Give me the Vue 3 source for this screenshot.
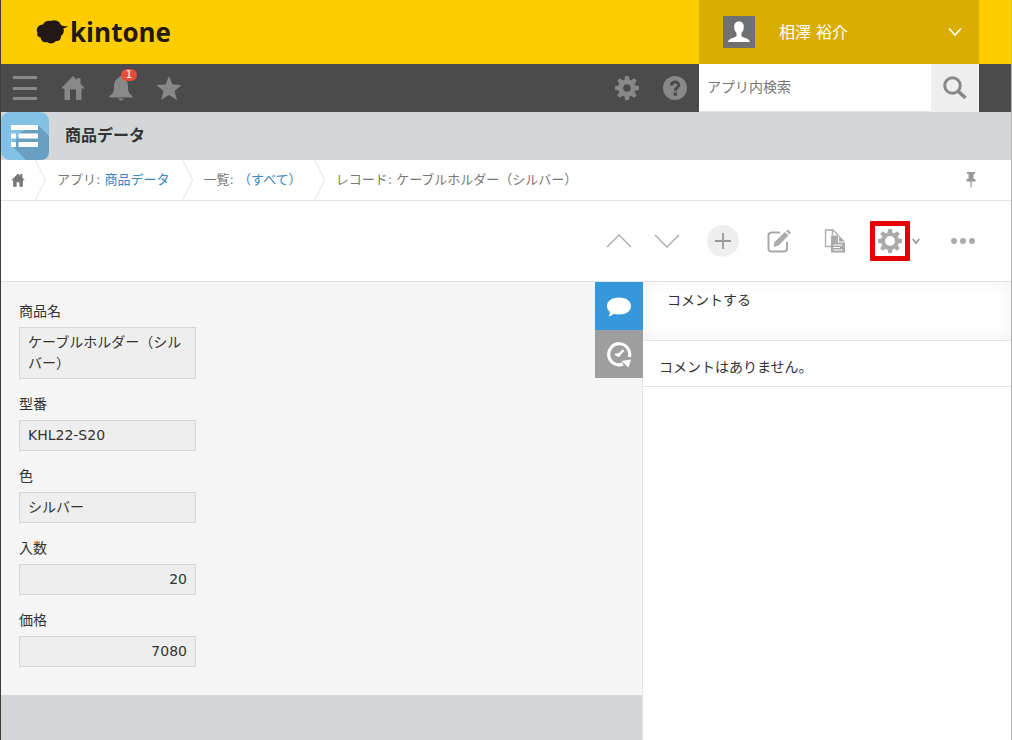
<script setup>
import { ref } from 'vue'

const query = ref('')
const comment = ref('')
const teeth = [0, 45, 90, 135, 180, 225, 270, 315]
const fields = [
  { id: 'name', label: '商品名', value: 'ケーブルホルダー（シルバー）' },
  { id: 'model', label: '型番', value: 'KHL22-S20' },
  { id: 'color', label: '色', value: 'シルバー' },
  { id: 'count', label: '入数', value: '20', numeric: true },
  { id: 'price', label: '価格', value: '7080', numeric: true },
]
</script>

<template>
  <div class="page">
    <header class="brand">
      <a href="#" class="logo">
        <svg width="34" height="26" viewBox="0 0 34 26" aria-hidden="true">
          <path fill="#231815" d="M8 5.500C9 2.500 13 1 16 2C19 .5 24 1.500 26 6C28 7.300 31 7.500 33 7.300C32 8.500 30 9 28.500 9.300C29.500 13 28 16 26 17C26 21 24 22.500 21 22C18 25.500 14 24.500 12 23C9 24 6 22 5.500 18.500C2.500 18 1.500 16 2.500 14C.5 10 3 5.500 8 5.500Z" />
        </svg>
        <span>kintone</span>
      </a>
      <button class="user" type="button">
        <svg class="avatar" width="32" height="32" viewBox="0 0 32 32" aria-hidden="true">
          <rect width="32" height="32" fill="#6f7072" />
          <path fill="#fff" d="M16 5.500C19.500 5.500 21 8 20.800 11.500C20.600 14 19.800 15.500 18.500 17V20C20 22 26.500 22 27 26H5C5.500 22 12 22 13.500 20V17C12.200 15.500 11.400 14 11.200 11.500C11 8 12.500 5.500 16 5.500Z" />
        </svg>
        <span>相澤 裕介</span>
        <svg class="chev" width="14" height="10" viewBox="0 0 14 10" aria-hidden="true"><path d="M1 1.500L7 8L13 1.500" fill="none" stroke="#fff" stroke-width="1.600" /></svg>
      </button>
    </header>

    <nav class="global">
      <button type="button" aria-label="メニュー">
        <svg width="24" height="26" viewBox="0 0 24 26"><path d="M0 2.500H24M0 13.500H24M0 23.500H24" stroke="#888" stroke-width="3" /></svg>
      </button>
      <button type="button" aria-label="ホーム">
        <svg width="26" height="26" viewBox="0 0 26 26"><path fill="#888" d="M13 1L17 5V3H20.500V8.500L25 13.500H21.500V25H16V14.500H10V25H4.500V13.500H1Z" /></svg>
      </button>
      <button type="button" class="bell" aria-label="通知">
        <svg width="24" height="26" viewBox="0 0 24 26"><path fill="#888" d="M12 1C13.500 1 14 2 14 3C18 4 19 8 19 12C19 17 20.500 19 23.500 21V22.500H.5V21C3.500 19 5 17 5 12C5 8 6 4 10 3C10 2 10.500 1 12 1ZM9.500 23.500H14.500C14.500 26 9.500 26 9.500 23.500Z" /></svg>
        <span class="count">1</span>
      </button>
      <button type="button" aria-label="お気に入り">
        <svg width="26" height="26" viewBox="0 0 26 26"><path fill="#888" d="M13 1L16.500 9.500L25.500 10L18.500 16L21 25L13 20L5 25L7.500 16L.5 10L9.500 9.500Z" /></svg>
      </button>
      <button type="button" class="push" aria-label="設定">
        <svg width="24" height="24" viewBox="-12 -12 24 24">
          <circle r="6.300" fill="none" stroke="#888" stroke-width="5" />
          <path v-for="a in teeth" :key="a" :transform="`rotate(${a})`" d="M-2.500 -8L-1.900 -12H1.900L2.500 -8Z" fill="#888" />
        </svg>
      </button>
      <button type="button" aria-label="ヘルプ">
        <svg width="24" height="24" viewBox="0 0 24 24">
          <circle cx="12" cy="12" r="12" fill="#888" />
          <path d="M8.300 9.500C8.300 4.800 15.700 4.800 15.700 9C15.700 11.500 12.300 11.800 12.300 14.800" fill="none" stroke="#4b4b4b" stroke-width="3" />
          <rect x="10.600" y="16.500" width="3.400" height="3.200" fill="#4b4b4b" />
        </svg>
      </button>
      <form class="search" @submit.prevent>
        <input v-model="query" type="text" placeholder="アプリ内検索" aria-label="アプリ内検索" />
        <button type="submit" aria-label="検索">
          <svg width="24" height="24" viewBox="0 0 24 24"><circle cx="9.500" cy="9.500" r="7.800" fill="none" stroke="#888" stroke-width="3" /><path d="M15 15L22.500 22" stroke="#888" stroke-width="3.600" /></svg>
        </button>
      </form>
    </nav>

    <div class="title">
      <svg width="48" height="48" viewBox="0 0 48 48" aria-hidden="true">
        <rect width="48" height="48" rx="9" fill="#82c0e6" />
        <path d="M37 13L48 24V39Q48 48 39 48H25L11 34L20 20Z" fill="#699fc3" />
        <path fill="#fff" d="M10 13H37V18H10ZM10 21.500H15V26.500H10ZM17.500 21.500H37V26.500H17.500ZM10 30H15V35H10ZM17.500 30H37V35H17.500Z" />
      </svg>
      <h1>商品データ</h1>
    </div>

    <nav class="crumbs" aria-label="パンくず">
      <a href="#" class="home" aria-label="ホーム">
        <svg width="14" height="14" viewBox="0 0 26 26"><path fill="#777" d="M13 1L17 5V2H21V8.500L25.500 13.500H22V25.500H15.500V17H10.500V25.500H4V13.500H.5Z" /></svg>
      </a>
      <svg class="sep" width="12" height="40" viewBox="0 0 12 40"><path d="M.5 0L10.500 20L.5 40" fill="none" stroke="#e3e3e3" /></svg>
      <span class="crumb">アプリ: <a href="#">商品データ</a></span>
      <svg class="sep" width="12" height="40" viewBox="0 0 12 40"><path d="M.5 0L10.500 20L.5 40" fill="none" stroke="#e3e3e3" /></svg>
      <span class="crumb">一覧: <a href="#">（すべて）</a></span>
      <svg class="sep" width="12" height="40" viewBox="0 0 12 40"><path d="M.5 0L10.500 20L.5 40" fill="none" stroke="#e3e3e3" /></svg>
      <span class="crumb">レコード: ケーブルホルダー（シルバー）</span>
      <button type="button" class="pin" aria-label="固定">
        <svg width="10" height="16" viewBox="0 0 10 16"><path fill="#999" d="M1 0H9V2H7.500V7H9.500V9.500H5.600V15.500H4.400V9.500H.5V7H2.500V2H1Z" /></svg>
      </button>
    </nav>

    <div class="actions">
      <div class="pager">
        <button type="button" aria-label="前のレコード"><svg width="26" height="16" viewBox="0 0 26 16"><path d="M1 14L13 2L25 14" fill="none" stroke="#aaa" stroke-width="1.400" /></svg></button>
        <button type="button" aria-label="次のレコード"><svg width="26" height="16" viewBox="0 0 26 16"><path d="M1 2L13 14L25 2" fill="none" stroke="#aaa" stroke-width="1.400" /></svg></button>
      </div>
      <button type="button" class="add" aria-label="追加"><svg width="16" height="16" viewBox="0 0 16 16"><path d="M8 0V16M0 8H16" stroke="#999" stroke-width="1.800" /></svg></button>
      <button type="button" aria-label="編集">
        <svg width="26" height="26" viewBox="0 0 26 26">
          <path d="M14 4.500H5.500Q2.500 4.500 2.500 7.500V20.500Q2.500 23.500 5.500 23.500H18Q21 23.500 21 20.500V14" fill="none" stroke="#aaa" stroke-width="2" />
          <path fill="#aaa" d="M7.500 19L8.500 14L19 4L22.500 7.500L12.500 17.500ZM20 3L22 1.500L25 4.500L23.500 6.500Z" />
        </svg>
      </button>
      <button type="button" aria-label="複製">
        <svg width="22" height="24" viewBox="0 0 22 24">
          <path d="M7 17.500H1.500V1H9L14 6V8M8.500 1V6.500" fill="none" stroke="#aaa" stroke-width="1.300" />
          <path fill="#aaa" d="M7 6.500H14V13.500H21V23.500H7ZM15 6.500L21 12.500H15Z" />
          <path d="M9.500 16H18.500M9.500 18.500H16M9.500 21H18.500" stroke="#fff" stroke-width="1.200" />
        </svg>
      </button>
      <div class="settings">
        <button type="button" class="marked" aria-label="アプリの設定">
          <svg width="24" height="24" viewBox="-12 -12 24 24">
            <circle r="6.900" fill="none" stroke="#aaa" stroke-width="4" />
            <path v-for="a in teeth" :key="a" :transform="`rotate(${a})`" d="M-2.500 -8L-1.900 -12H1.900L2.500 -8Z" fill="#aaa" />
          </svg>
        </button>
        <button type="button" class="caret" aria-label="設定メニュー"><svg width="8" height="7" viewBox="0 0 8 7"><path d="M.8 1L4 5L7.200 1" fill="none" stroke="#999" stroke-width="1.800" /></svg></button>
      </div>
      <button type="button" aria-label="その他"><svg width="26" height="8" viewBox="0 0 26 8"><g fill="#aaa"><circle cx="4" cy="4" r="3" /><circle cx="13" cy="4" r="3" /><circle cx="22" cy="4" r="3" /></g></svg></button>
    </div>

    <main class="body">
      <section class="record">
        <div class="sheet">
          <div class="fields">
            <div v-for="f in fields" :key="f.id" class="field">
              <label :for="f.id">{{ f.label }}</label>
              <output :id="f.id" :class="{ numeric: f.numeric }">{{ f.value }}</output>
            </div>
          </div>
          <div class="tabs">
            <button type="button" class="active" aria-label="コメント">
              <svg width="26" height="22" viewBox="0 0 26 22"><path fill="#fff" d="M13 2.500C20 2.500 25 6 25 11S20 19.500 13 19.500C11 19.500 9.500 19.300 8 18.800C6.500 20.300 4.500 21.200 2.500 21.500C3.500 20 4 18.500 4 17C2 15.500 1 13.500 1 11C1 6 6 2.500 13 2.500Z" /></svg>
            </button>
            <button type="button" aria-label="変更履歴">
              <svg width="26" height="28" viewBox="0 0 26 28">
                <path d="M23.300 17A10.500 10.500 0 1 0 17 24" fill="none" stroke="#fff" stroke-width="3.200" />
                <path d="M15.500 21L25 19.500L22.500 27.500Z" fill="#fff" />
                <path d="M17.500 10L13 15" fill="none" stroke="#fff" stroke-width="2.400" />
                <path d="M8 14.200L13.500 12.700L14.500 16.200L12 17Z" fill="#fff" />
              </svg>
            </button>
          </div>
        </div>
      </section>
      <aside class="comments">
        <textarea v-model="comment" placeholder="コメントする" aria-label="コメントする"></textarea>
        <p>コメントはありません。</p>
      </aside>
    </main>
  </div>
</template>

<style>
body {
  background: #fff;
}
</style>

<style scoped>
.page,
.page * {
  box-sizing: border-box;
}
.page {
  display: flex;
  flex-direction: column;
  min-height: 100vh;
  border-left: 1px solid #3c3c3c;
  border-right: 1px solid #b5b5b5;
  color: #333;
  font: 14px/21px "DejaVu Sans", "Noto Sans CJK JP", sans-serif;
}
button {
  display: flex;
  align-items: center;
  justify-content: center;
  padding: 0;
  border: 0;
  background: none;
  color: inherit;
  font: inherit;
  cursor: pointer;
}
svg {
  display: block;
  flex: none;
}
a {
  color: #3d86be;
  text-decoration: none;
}
.brand {
  display: flex;
  justify-content: space-between;
  height: 64px;
  padding: 0 32px 0 34px;
  background: #ffcc00;
}
.logo {
  display: flex;
  align-items: center;
  gap: 1px;
  color: #231815;
  font: 700 26px/32px "Open Sans", sans-serif;
}
.user {
  width: 280px;
  padding: 0 17px 0 24px;
  background: #d9ae00;
  color: #fff;
  font-size: 16px;
}
.user span {
  margin-left: 24px;
}
.chev {
  margin-left: auto;
}
.global {
  display: flex;
  height: 48px;
  padding-right: 32px;
  background: #4b4b4b;
}
.global button {
  width: 48px;
  height: 48px;
}
.bell {
  position: relative;
}
.count {
  position: absolute;
  top: 5px;
  right: 8px;
  width: 16px;
  height: 12px;
  border-radius: 6px;
  background: #e74c3c;
  color: #fff;
  font-size: 10px;
  line-height: 12px;
}
.push {
  margin-left: auto;
}
.search {
  display: flex;
  width: 280px;
}
.search input {
  flex: 1;
  min-width: 0;
  padding: 0 8px;
  border: 0;
  border-bottom: 1px solid #e3e5e5;
  background: #fff;
  color: #333;
  font: inherit;
}
.search input::placeholder {
  color: #777;
}
.search button {
  background: #eee;
}
.title {
  display: flex;
  align-items: center;
  gap: 16px;
  height: 48px;
  background: #d4d7d7;
}
h1 {
  margin: 0;
  font-size: 16px;
  line-height: 24px;
}
.crumbs {
  display: flex;
  align-items: center;
  height: 41px;
  padding-right: 24px;
  border-bottom: 1px solid #e3e3e3;
  background: #fff;
  color: #777;
  font-size: 13px;
  line-height: 20px;
}
.home {
  display: flex;
  justify-content: center;
  width: 34px;
}
.crumb {
  padding: 0 12px 0 10px;
}
.pin {
  width: 32px;
  height: 32px;
  margin-left: auto;
}
.actions {
  display: flex;
  align-items: center;
  justify-content: flex-end;
  gap: 24px;
  height: 81px;
  padding-right: 32px;
  border-bottom: 1px solid #e3e3e3;
}
.actions button {
  width: 32px;
  height: 32px;
}
.pager {
  display: flex;
  gap: 16px;
}
.actions .add {
  border-radius: 50%;
  background: #eee;
}
.settings {
  display: flex;
  align-items: center;
  margin: 0 1px 0 -5px;
}
.actions .marked {
  width: 40px;
  height: 40px;
  border: 5px solid #e60000;
  border-radius: 1px;
}
.actions .caret {
  width: 12px;
}
.body {
  display: flex;
  flex: 1;
}
.record {
  flex: 1;
  background: #d4d7d7;
}
.sheet {
  display: flex;
  justify-content: space-between;
  background: #f5f5f5;
}
.fields {
  display: flex;
  flex-direction: column;
  gap: 15px;
  padding: 19px 18px 28px;
}
.field {
  display: flex;
  flex-direction: column;
  gap: 5px;
  width: 177px;
}
output {
  padding: 4px 8px;
  border: 1px solid #d4d7d7;
  background: #eee;
}
.numeric {
  text-align: right;
}
.tabs {
  position: relative;
}
.tabs button {
  width: 48px;
  height: 48px;
  background: #9e9e9e;
}
.tabs .active {
  background: #3498db;
}
.comments {
  width: 368px;
  box-shadow: -1px 0 #e3e3e3;
  background: #fff;
}
.comments textarea {
  display: block;
  width: 100%;
  height: 59px;
  padding: 8px 24px;
  border: 0;
  border-bottom: 1px solid #e3e3e3;
  background: #fff;
  box-shadow: inset 0 0 16px #f0f0f0;
  font: inherit;
  resize: none;
}
.comments textarea::placeholder {
  color: #333;
}
.comments p {
  margin: 0;
  padding: 16px 16px 8px;
  border-bottom: 1px solid #e3e3e3;
}
</style>
